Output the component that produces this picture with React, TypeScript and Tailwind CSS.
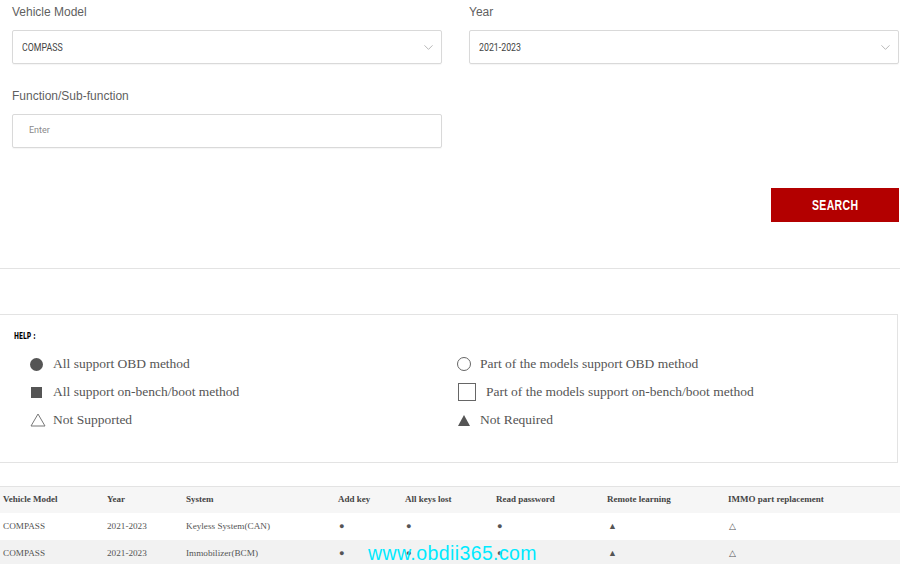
import { ChevronDown } from 'lucide-react';

const rows = [
  { model: 'COMPASS', year: '2021-2023', system: 'Keyless System(CAN)' },
  { model: 'COMPASS', year: '2021-2023', system: 'Immobilizer(BCM)' },
];

const cols = 'grid grid-cols-[104px_79px_152px_67px_91px_111px_121px_1fr]';

function Field({ label, value, select }: { label: string; value: string; select?: boolean }) {
  return (
    <div className="flex flex-col">
      <label className="text-[12px] leading-4 text-[#5f5f5f] mb-[10px] font-['Liberation_Sans',sans-serif]">{label}</label>
      <div className="h-[34px] border border-[#d9d9d9] rounded-[2px] flex items-center justify-between pl-[9px] pr-[5px] shadow-[0_1px_1px_rgba(0,0,0,0.04)]">
        {select ? (
          <span className="text-[10px] text-[#444] inline-block scale-x-[0.88] origin-left">{value}</span>
        ) : (
          <span className="text-[9px] text-[#8a8a8a] pl-[7px]">{value}</span>
        )}
        {select && <ChevronDown className="w-[15px] h-[15px] text-[#a0a0a0]" strokeWidth={1.2} />}
      </div>
    </div>
  );
}

function Legend({ icon, text, wide }: { icon: React.ReactNode; text: string; wide?: boolean }) {
  return (
    <div className="flex items-center h-7">
      <div className={`${wide ? 'w-[29px]' : 'w-[23px]'} flex items-center`}>{icon}</div>
      <span className="text-[13.5px] text-[#555]">{text}</span>
    </div>
  );
}

export default function App() {
  return (
    <div className="w-[900px] h-[564px] overflow-hidden bg-white relative font-['Roboto',sans-serif]">
      {/* search form */}
      <div className="pl-3 pr-px pt-1">
        <div className="grid grid-cols-2 gap-x-[27px]">
          <Field label="Vehicle Model" value="COMPASS" select />
          <Field label="Year" value="2021-2023" select />
          <div className="mt-6">
            <Field label="Function/Sub-function" value="Enter" />
          </div>
        </div>
        <div className="flex justify-end mt-10">
          <button className="w-[128px] h-[34px] bg-[#b30000] text-white font-['Liberation_Sans',sans-serif]">
            <span className="inline-block text-[15px] font-bold tracking-[0.5px] scale-x-[0.7]">SEARCH</span>
          </button>
        </div>
      </div>

      <div className="mt-[46px] border-t border-[#e3e3e3]" />

      {/* help */}
      <div className="mt-[45px] mr-[2px] border border-l-0 border-[#e3e3e3] h-[149px] pt-[13px] font-['Liberation_Serif',serif]">
        <div className="pl-[14px] leading-3">
          <span className="inline-block origin-left scale-x-[0.7] text-[8.5px] font-black text-black font-['DejaVu_Sans',sans-serif]">
            HELP :
          </span>
        </div>
        <div className="grid grid-cols-[427px_1fr] pl-[30px] mt-2">
          <div className="flex flex-col">
            <Legend icon={<span className="block w-[13px] h-[13px] rounded-full bg-[#555]" />} text="All support OBD method" />
            <Legend icon={<span className="block w-[11px] h-[11px] bg-[#555] ml-px" />} text="All support on-bench/boot method" />
            <Legend
              icon={
                <svg width="16" height="14" viewBox="0 0 16 14">
                  <path d="M8 1 L15 13 L1 13 Z" fill="none" stroke="#777" strokeWidth="1" />
                </svg>
              }
              text="Not Supported"
            />
          </div>
          <div className="flex flex-col">
            <Legend icon={<span className="block w-[14px] h-[14px] rounded-full border border-[#666]" />} text="Part of the models support OBD method" />
            <Legend wide icon={<span className="block w-[18px] h-[18px] border-[1.5px] border-[#666] ml-px" />} text="Part of the models support on-bench/boot method" />
            <Legend
              icon={
                <svg width="14" height="13" viewBox="0 0 14 13">
                  <path d="M7 1 L13 12 L1 12 Z" fill="#555" />
                </svg>
              }
              text="Not Required"
            />
          </div>
        </div>
      </div>

      {/* table */}
      <div className="mt-[23px] border-t border-[#e3e3e3] font-['Liberation_Serif',serif] text-[9.2px] text-[#555]">
        <div className={`${cols} h-[26px] items-center bg-[#f6f6f6] font-bold text-[#444] pl-[3px] text-[9px]`}>
          <span>Vehicle Model</span>
          <span>Year</span>
          <span>System</span>
          <span>Add key</span>
          <span>All keys lost</span>
          <span>Read password</span>
          <span>Remote learning</span>
          <span>IMMO part replacement</span>
        </div>
        {rows.map((r, i) => (
          <div key={i} className={`${cols} h-[27px] items-center pl-[3px] ${i % 2 ? 'bg-[#f2f2f2]' : 'bg-white'}`}>
            <span>{r.model}</span>
            <span>{r.year}</span>
            <span>{r.system}</span>
            <span className="pl-px">●</span>
            <span className="pl-px">●</span>
            <span className="pl-px">●</span>
            <span className="pl-px text-[9px]">▲</span>
            <span className="pl-px text-[9px]">△</span>
          </div>
        ))}
      </div>

      {/* watermark */}
      <div className="absolute left-[368px] top-[541px] text-[19.5px] leading-6 text-[#00eaff] font-['Liberation_Sans',sans-serif] tracking-[0.4px]">
        www.obdii365.com
      </div>
    </div>
  );
}
